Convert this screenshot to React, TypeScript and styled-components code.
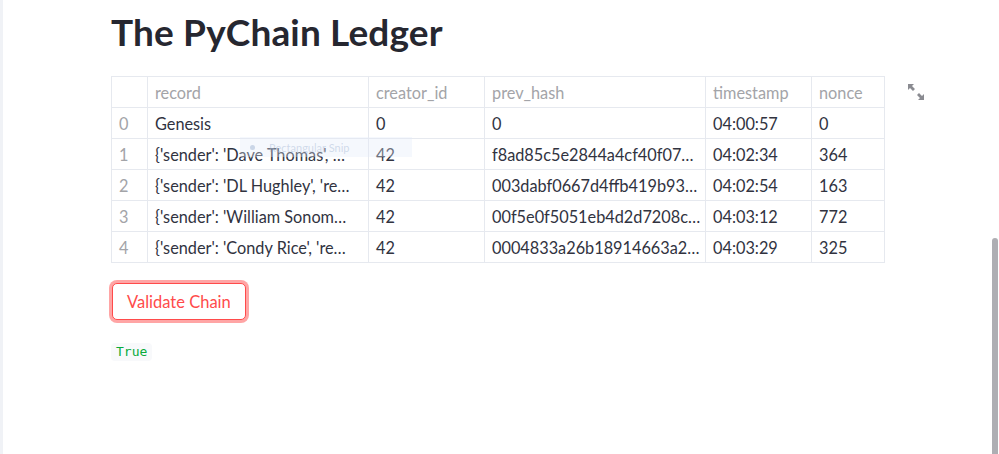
import React from "react";
import styled, { createGlobalStyle } from "styled-components";

const Global = createGlobalStyle`
  html, body { margin: 0; padding: 0; background: #fff; }
  body { font-family: "Lato", "Noto Sans", sans-serif; color: #31333f; overflow: hidden; }
`;

const Page = styled.div`
  display: flex;
  width: 999px;
  height: 454px;
  position: relative;
`;

const SideEdge = styled.div`
  width: 3px;
  flex: none;
  background: #f0f2f6;
`;

const Main = styled.main`
  flex: 1;
  padding: 8px 0 0 108px;
  display: flex;
  flex-direction: column;
`;

const Title = styled.h1`
  margin: 0;
  font-family: "Lato", sans-serif;
  font-weight: 700;
  font-size: 37px;
  line-height: 48px;
  color: #262730;
  letter-spacing: 0.15px;
`;

const TableRow = styled.div`
  display: flex;
  align-items: flex-start;
  margin-top: 20px;
`;

const Table = styled.table`
  border-collapse: collapse;
  font-size: 16.3px;
  table-layout: fixed;
  width: 773px;
  flex: none;
`;

const Th = styled.th<{ $w: number }>`
  width: ${(p) => p.$w}px;
  height: 31px;
  box-sizing: border-box;
  border: 1px solid #e6e9ef;
  padding: 0 7px;
  text-align: left;
  font-weight: 400;
  color: #a3a4a8;
  white-space: nowrap;
  overflow: hidden;
`;

const Td = styled.td<{ $index?: boolean }>`
  height: 31px;
  box-sizing: border-box;
  border: 1px solid #e6e9ef;
  padding: 0 7px;
  color: ${(p) => (p.$index ? "#a3a4a8" : "#31333f")};
  white-space: nowrap;
  overflow: hidden;
`;

const ExpandButton = styled.div`
  margin: 7px 0 0 22px;
  width: 18px;
  height: 18px;
  color: #8a8b91;
`;

const Button = styled.button`
  margin-top: 20px;
  margin-left: 1px;
  align-self: flex-start;
  font-family: "Lato", sans-serif;
  font-size: 16.5px;
  color: #ff4b4b;
  background: #fff;
  border: 1px solid #ff4b4b;
  border-radius: 5px;
  padding: 0 14px;
  height: 37px;
  box-shadow: 0 0 0 3px rgba(255, 75, 75, 0.5);
`;

const Code = styled.code`
  margin-top: 23px;
  align-self: flex-start;
  font-family: "DejaVu Sans Mono", monospace;
  font-size: 13px;
  color: #09ab3b;
  background: #f8f9fb;
  border-radius: 4px;
  padding: 1px 5px 2px;
  line-height: 15px;
`;

const Snip = styled.div`
  position: absolute;
  left: 240px;
  top: 137px;
  width: 172px;
  height: 20px;
  background: rgba(225, 236, 250, 0.35);
  display: flex;
  align-items: center;
  gap: 14px;
  padding-left: 10px;
  box-sizing: border-box;
  font-size: 11px;
  color: rgba(160, 180, 210, 0.45);
  pointer-events: none;
`;

const Dot = styled.span`
  width: 5px;
  height: 5px;
  border-radius: 50%;
  background: rgba(160, 180, 210, 0.5);
`;

const Scrollbar = styled.div`
  position: absolute;
  right: 1px;
  top: 238px;
  width: 6px;
  height: 216px;
  border-radius: 3px 3px 0 0;
  background: #aeaeb3;
`;

const cols = [
  { key: "", w: 36 },
  { key: "record", w: 221 },
  { key: "creator_id", w: 116 },
  { key: "prev_hash", w: 221 },
  { key: "timestamp", w: 106 },
  { key: "nonce", w: 73 },
];

const rows = [
  ["0", "Genesis", "0", "0", "04:00:57", "0"],
  ["1", "{'sender': 'Dave Thomas', …", "42", "f8ad85c5e2844a4cf40f07…", "04:02:34", "364"],
  ["2", "{'sender': 'DL Hughley', 're…", "42", "003dabf0667d4ffb419b93…", "04:02:54", "163"],
  ["3", "{'sender': 'William Sonom…", "42", "00f5e0f5051eb4d2d7208c…", "04:03:12", "772"],
  ["4", "{'sender': 'Condy Rice', 're…", "42", "0004833a26b18914663a2…", "04:03:29", "325"],
];

function ExpandIcon() {
  return (
    <svg width="18" height="18" viewBox="0 0 18 18" fill="currentColor">
      <path d="M1 1h6L5 3l3 3-2 2-3-3-2 2z" />
      <path d="M17 17h-6l2-2-3-3 2-2 3 3 2-2z" />
    </svg>
  );
}

export default function App() {
  return (
    <>
      <Global />
      <Page>
        <SideEdge />
        <Main>
          <Title>The PyChain Ledger</Title>
          <TableRow>
            <Table>
              <thead>
                <tr>
                  {cols.map((c, i) => (
                    <Th key={i} $w={c.w}>{c.key}</Th>
                  ))}
                </tr>
              </thead>
              <tbody>
                {rows.map((r) => (
                  <tr key={r[0]}>
                    {r.map((v, i) => (
                      <Td key={i} $index={i === 0}>{v}</Td>
                    ))}
                  </tr>
                ))}
              </tbody>
            </Table>
            <ExpandButton>
              <ExpandIcon />
            </ExpandButton>
          </TableRow>
          <Button>Validate Chain</Button>
          <Code>True</Code>
        </Main>
        <Snip>
          <Dot />
          Rectangular Snip
        </Snip>
        <Scrollbar />
      </Page>
    </>
  );
}
